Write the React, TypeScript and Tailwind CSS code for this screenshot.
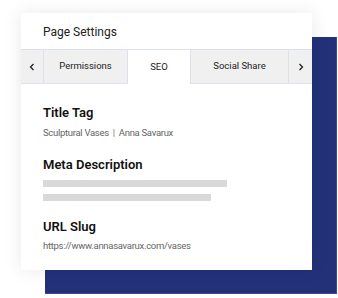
import React from "react";

const Chevron = ({ dir }: { dir: "left" | "right" }) => (
  <svg width="6" height="8" viewBox="0 0 6 8" fill="none">
    <path
      d={dir === "left" ? "M4.5 1L1.5 4L4.5 7" : "M1.5 1L4.5 4L1.5 7"}
      stroke="#222"
      strokeWidth="1.3"
    />
  </svg>
);

export default function App() {
  return (
    <div
      className="w-[338px] h-[298px] bg-white overflow-hidden"
      style={{ fontFamily: "Roboto, 'Liberation Sans', sans-serif" }}
    >
      <div className="relative pt-[13px] pl-[21px]">
        <div className="absolute left-[45px] top-[37px] w-[292px] h-[257px] bg-[#233179] border-r border-b border-[#3a4a94]" />
        <div className="relative w-[291px] h-[257px] bg-white shadow-[0_0_18px_rgba(0,0,0,0.09)] flex flex-col">
          <div className="h-[36px] pl-[22px] flex items-center text-[12px] text-[#222] pt-[1px]">
            Page Settings
          </div>
          <div className="h-[35px] flex border-t border-[#dde2ea] text-[9.5px] text-[#222]">
            <div className="w-[23px] bg-[#f0f0f0] border-b border-r border-[#dde2ea] flex items-center justify-center">
              <Chevron dir="left" />
            </div>
            <div className="w-[83px] bg-[#f0f0f0] border-b border-[#dde2ea] flex items-center justify-center">
              Permissions
            </div>
            <div className="w-[64px] bg-white border-l border-r border-[#dde2ea] flex items-center justify-center">
              SEO
            </div>
            <div className="w-[98px] bg-[#f0f0f0] border-b border-r border-[#dde2ea] flex items-center justify-center">
              Social Share
            </div>
            <div className="flex-1 bg-[#f0f0f0] border-b border-[#dde2ea] flex items-center justify-center">
              <Chevron dir="right" />
            </div>
          </div>
          <div className="px-[22px] pt-[20px] flex flex-col">
            <div className="text-[13px] leading-[18px] font-semibold text-[#111]">Title Tag</div>
            <div className="mt-[4px] text-[9.5px] leading-[14px] tracking-[-0.3px] text-[#666]">
              Sculptural Vases<span className="mx-[4px] text-[#777]">|</span>Anna Savarux
            </div>
            <div className="mt-[16px] text-[13px] leading-[18px] font-semibold text-[#111]">Meta Description</div>
            <div className="mt-[6px] w-[184px] h-[7px] bg-[#d9d9d9]" />
            <div className="mt-[7px] w-[168px] h-[7px] bg-[#d9d9d9]" />
            <div className="mt-[17px] text-[13px] leading-[18px] font-semibold text-[#111]">URL Slug</div>
            <div className="mt-[3px] text-[9.5px] leading-[14px] tracking-[-0.3px] text-[#666]">
              https://www.annasavarux.com/vases
            </div>
          </div>
        </div>
      </div>
    </div>
  );
}
